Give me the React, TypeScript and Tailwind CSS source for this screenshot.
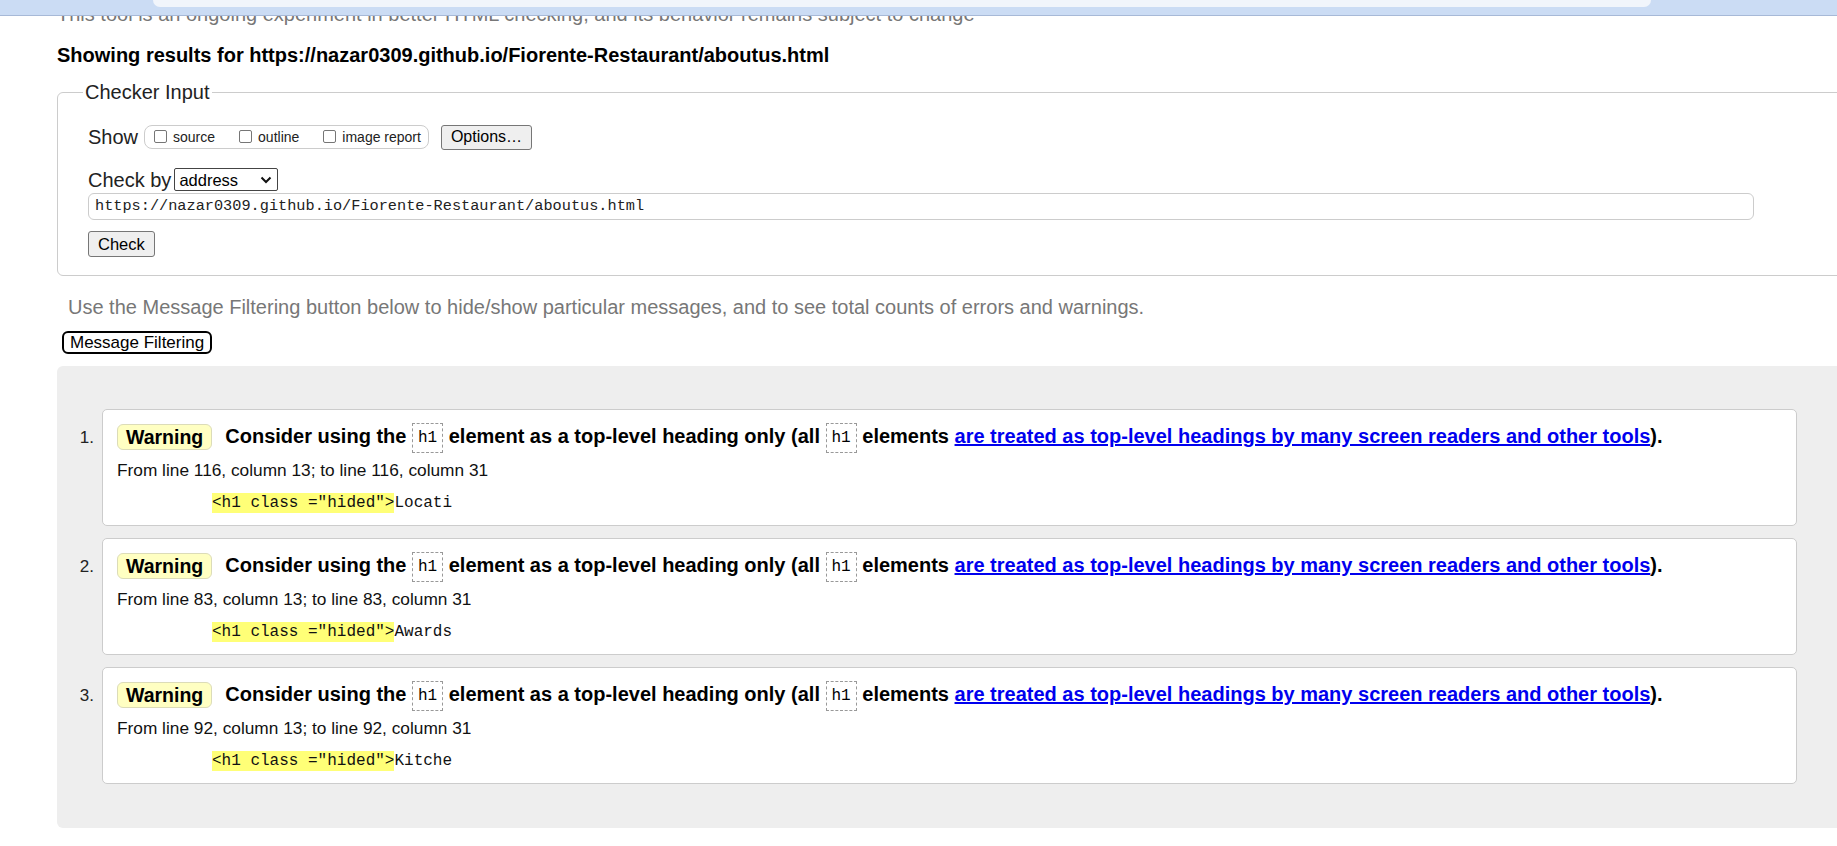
import React from "react";

const mono = "font-['Liberation_Mono','DejaVu_Sans_Mono',monospace]";

const messages = [
  { n: 1, from: "From line 116, column 13; to line 116, column 31", tail: "Locati" },
  { n: 2, from: "From line 83, column 13; to line 83, column 31", tail: "Awards" },
  { n: 3, from: "From line 92, column 13; to line 92, column 31", tail: "Kitche" },
];

function Checkbox({ label }: { label: string }) {
  return (
    <span className="flex items-center">
      <span className="self-start mt-[1px] w-[13px] h-[13px] border border-[#767676] rounded-[2px] bg-white" />
      <span className="ml-[6px] text-[14px] leading-[16px] text-[#222]">{label}</span>
    </span>
  );
}

function CodeBox() {
  return (
    <span
      className={`${mono} inline-block align-middle h-[30px] -my-[2px] px-[5px] border border-dashed border-[#999] text-[16px] leading-[28px] font-normal`}
    >
      h1
    </span>
  );
}

function Message({ n, from, tail }: { n: number; from: string; tail: string }) {
  return (
    <li className="flex">
      {/* list number sits outside the card */}
      <div className="w-[45px] pr-[8px] pt-[16px] text-right text-[17px] leading-[26px] text-[#222]">{n}.</div>
      <div className="flex-1 bg-white border border-[#cccccc] rounded-[5px] px-[14px] pt-[14px] pb-[12px]">
        <div className="flex items-center h-[26px]">
          <span className="h-[26px] px-[8px] bg-[#ffffc2] border border-[#dcdcb8] rounded-[6px] font-bold text-[19.5px] leading-[24px]">
            Warning
          </span>
          <span className="ml-[13px] font-bold text-[20px] leading-[26px] whitespace-nowrap">
            Consider using the <CodeBox /> element as a top-level heading only (all <CodeBox /> elements{" "}
            <a href="#" className="text-[#0000ee] underline">
              are treated as top-level headings by many screen readers and other tools
            </a>
            ).
          </span>
        </div>
        <p className="mt-[9px] text-[17.3px] leading-[22px] text-[#111]">{from}</p>
        <p className={`${mono} mt-[12px] ml-[95px] text-[16px] leading-[20px] text-[#111]`}>
          <span className="inline-block bg-[#ffff77]">&lt;h1 class ="hided"&gt;</span>
          {tail}
        </p>
      </div>
    </li>
  );
}

export default function App() {
  return (
    <div className="relative min-h-screen overflow-hidden bg-white text-black font-['Liberation_Sans',Arial,sans-serif]">
      {/* browser chrome strip overlapping the page top */}
      <div className="absolute top-0 left-0 right-0 z-10 h-[16px] bg-[#cbdcf4] border-b border-[#a7b9d7]">
        <div className="ml-[153px] w-[1498px] h-[7px] bg-[#f1f5fb] rounded-b-[10px]" />
      </div>

      <div className="pl-[57px]">
        <p className="pt-[3px] text-[20px] leading-[22px] text-[#777]">
          This tool is an ongoing experiment in better HTML checking, and its behavior remains subject to change
        </p>
        <h2 className="mt-[19px] font-bold text-[20px] leading-[22px]">
          Showing results for https://nazar0309.github.io/Fiorente-Restaurant/aboutus.html
        </h2>

        <fieldset className="mt-[15px] -mr-[40px] border border-[#cccccc] rounded-[6px] pl-[30px] pt-[21px] pb-[18px]">
          <legend className="-ml-[5px] px-[2px] text-[20px] leading-[22px] text-[#222]">Checker Input</legend>

          <div className="flex items-center h-[26px]">
            <span className="text-[20px] leading-[24px] text-[#222]">Show</span>
            <div className="ml-[6px] flex h-[24px] items-center gap-[24px] pl-[9px] pr-[7px] border border-[#cccccc] rounded-[8px]">
              <Checkbox label="source" />
              <Checkbox label="outline" />
              <Checkbox label="image report" />
            </div>
            <button className="ml-[12px] h-[25px] px-[9px] bg-[#efefef] border border-[#767676] rounded-[3px] text-[16px] leading-[20px]">
              Options…
            </button>
          </div>

          <div className="mt-[18px] flex items-center h-[23px]">
            <span className="text-[20px] leading-[24px] text-[#222]">Check by</span>
            <div className="ml-[3px] flex items-center justify-between w-[104px] h-[23px] pl-[4px] pr-[5px] border border-[#444] rounded-[2px] text-[16.5px] leading-[20px]">
              <span>address</span>
              <svg width="12" height="8" viewBox="0 0 12 8" fill="none">
                <path d="M1.5 1.5l4.5 4.5 4.5-4.5" stroke="#111" strokeWidth="2" />
              </svg>
            </div>
          </div>

          <div
            className={`${mono} mt-[2px] w-[1666px] h-[27px] pl-[6px] flex items-center border border-[#cccccc] rounded-[6px] text-[15.25px] text-[#222]`}
          >
            https://nazar0309.github.io/Fiorente-Restaurant/aboutus.html
          </div>

          <button className="mt-[11px] h-[26px] px-[9px] bg-[#efefef] border border-[#767676] rounded-[3px] text-[16.5px] leading-[20px]">
            Check
          </button>
        </fieldset>

        <p className="mt-[20px] pl-[11px] text-[20px] leading-[22px] text-[#777]">
          Use the Message Filtering button below to hide/show particular messages, and to see total counts of errors and warnings.
        </p>
        <button className="mt-[13px] ml-[5px] h-[23px] px-[6px] border-2 border-black rounded-[6px] text-[17px] leading-[19px]">
          Message Filtering
        </button>

        <div className="mt-[11px] bg-[#eeeeee] rounded-l-[6px] pt-[43px] pb-[44px] pr-[40px]">
          <ol className="flex flex-col gap-[12px]">
            {messages.map((m) => (
              <Message key={m.n} {...m} />
            ))}
          </ol>
        </div>
      </div>
    </div>
  );
}
